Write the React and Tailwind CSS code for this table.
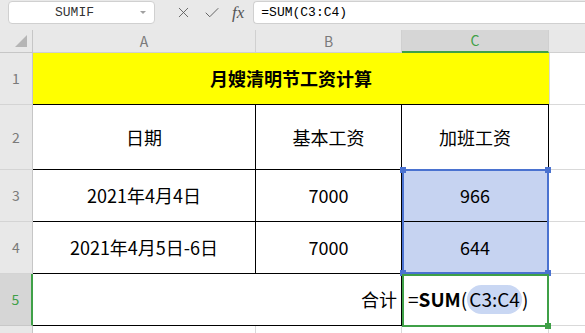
import { X, Check } from "lucide-react";

const cjk = { fontFamily: '"Noto Sans CJK SC", "Noto Sans", sans-serif' };

function RowHead({ n, h, active }) {
  return (
    <div
      className={`flex w-[33px] shrink-0 items-center justify-center border-b text-[14px] ${
        active
          ? "border-r-2 border-b-[#c8c8c8] border-r-[#3fa047] bg-[#d6d6d6] text-[#3fa047]"
          : "border-r border-b-[#d4d4d4] border-r-[#c6c6c6] bg-[#e8e8e8] text-[#7a7a7a]"
      }`}
      style={{ height: h }}
    >
      {n}
    </div>
  );
}

function Cell({ w, children, className = "bg-white" }) {
  return (
    <div
      className={`flex shrink-0 items-center justify-center border-r border-b border-black text-[18px] text-black ${className}`}
      style={{ width: w }}
    >
      {children}
    </div>
  );
}

function Rest({ className = "" }) {
  return <div className={`flex-1 border-b border-[#d9d9d9] bg-white ${className}`} />;
}

export default function App() {
  return (
    <div className="h-[333px] w-[585px] overflow-hidden bg-[#e9e9e9]" style={cjk}>
      {/* formula toolbar */}
      <div className="flex h-[30px] items-start pt-px">
        <div className="ml-2 flex h-[23px] w-[147px] items-center rounded border border-[#d0d0d0] bg-white">
          <span className="flex-1 text-center text-[13px] text-[#333]" style={{ fontFamily: '"Liberation Mono", monospace' }}>
            SUMIF
          </span>
          <span className="mr-2 border-x-[3px] border-t-[3px] border-x-transparent border-t-[#a0a0a0]" />
        </div>
        <div className="ml-[20px] flex h-[23px] items-center gap-[11px] text-[#555]">
          <X size={17} strokeWidth={1.2} />
          <Check size={18} strokeWidth={1.2} />
          <span className="text-[17px] italic" style={{ fontFamily: '"Liberation Serif", serif' }}>
            fx
          </span>
        </div>
        <div
          className="ml-[9px] flex h-[23px] flex-1 items-center rounded-l border border-r-0 border-[#d0d0d0] bg-white pl-[7px] text-[13px] text-black"
          style={{ fontFamily: '"Liberation Mono", monospace' }}
        >
          =SUM(C3:C4)
        </div>
      </div>

      {/* column headers */}
      <div className="flex h-[23px] text-[14px] text-[#7a7a7a]">
        <div className="relative w-[33px] shrink-0 border-r border-b border-r-[#c6c6c6] border-b-[#c6c6c6] bg-[#e8e8e8]">
          <span className="absolute right-[5px] bottom-[5px] border-b-[12px] border-l-[12px] border-b-[#b5b5b5] border-l-transparent" />
        </div>
        <div className="flex w-[223px] shrink-0 items-center justify-center border-r border-b border-[#d0d0d0] bg-[#e8e8e8]">A</div>
        <div className="flex w-[146px] shrink-0 items-center justify-center border-r border-b border-[#d0d0d0] bg-[#e8e8e8]">B</div>
        <div className="flex w-[147px] shrink-0 items-center justify-center border-r border-b-2 border-r-[#d0d0d0] border-b-[#3fa047] bg-[#d6d6d6] text-[#3fa047]">C</div>
        <div className="flex-1 border-b border-[#d0d0d0] bg-[#e8e8e8]" />
      </div>

      <div className="relative">
        {/* row 1 */}
        <div className="flex h-[52px]">
          <RowHead n={1} h={52} />
          <div className="flex w-[516px] shrink-0 items-center justify-center border-b border-black bg-[#ffff00] text-[18px] font-bold text-black">
            月嫂清明节工资计算
          </div>
          <Rest className="border-l border-l-[#d9d9d9]" />
        </div>

        {/* row 2 */}
        <div className="flex h-[65px]">
          <RowHead n={2} h={65} />
          <Cell w={223}>日期</Cell>
          <Cell w={146}>基本工资</Cell>
          <Cell w={147}>加班工资</Cell>
          <Rest />
        </div>

        {/* row 3 */}
        <div className="flex h-[52px]">
          <RowHead n={3} h={52} />
          <Cell w={223}>2021年4月4日</Cell>
          <Cell w={146}>7000</Cell>
          <Cell w={147} className="bg-[#c6d3f1] text-[#1f2937]">966</Cell>
          <Rest />
        </div>

        {/* row 4 */}
        <div className="flex h-[52px]">
          <RowHead n={4} h={52} />
          <Cell w={223}>2021年4月5日-6日</Cell>
          <Cell w={146}>7000</Cell>
          <Cell w={147} className="bg-[#c6d3f1] text-[#1f2937]">644</Cell>
          <Rest />
        </div>

        {/* row 5 */}
        <div className="flex h-[52px]">
          <RowHead n={5} h={52} active />
          <Cell w={369} className="justify-end bg-white pr-[4px]">合计</Cell>
          <Cell w={147} className="justify-start bg-white pl-[6px] text-[19px]">
            <span>=</span>
            <span className="font-bold">SUM</span>
            <span>(</span>
            <span className="rounded-full bg-[#c9d7f3] px-[2px]">C3:C4</span>
            <span>)</span>
          </Cell>
          <Rest />
        </div>

        {/* row 6 */}
        <div className="flex h-[20px]">
          <RowHead n="" h={20} />
          <div className="w-[223px] shrink-0 border-r border-[#d9d9d9] bg-white" />
          <div className="w-[146px] shrink-0 border-r border-[#d9d9d9] bg-white" />
          <div className="w-[147px] shrink-0 border-r border-[#d9d9d9] bg-white" />
          <div className="flex-1 bg-white" />
        </div>

        {/* selection C3:C4 */}
        <div className="pointer-events-none absolute top-[116px] left-[402px] h-[105px] w-[147px] border-2 border-[#4a72d0]">
          <span className="absolute -top-[4px] -left-[4px] h-[6px] w-[6px] bg-[#4a72d0]" />
          <span className="absolute -top-[4px] -right-[4px] h-[6px] w-[6px] bg-[#4a72d0]" />
          <span className="absolute -bottom-[4px] -left-[4px] h-[6px] w-[6px] bg-[#4a72d0]" />
          <span className="absolute -right-[4px] -bottom-[4px] h-[6px] w-[6px] bg-[#4a72d0]" />
        </div>

        {/* active cell C5 */}
        <div className="pointer-events-none absolute top-[221px] left-[402px] h-[53px] w-[147px] border-2 border-[#3fa047]">
          <span className="absolute -right-[4px] -bottom-[4px] h-[6px] w-[6px] bg-[#3fa047]" />
        </div>
      </div>
    </div>
  );
}
